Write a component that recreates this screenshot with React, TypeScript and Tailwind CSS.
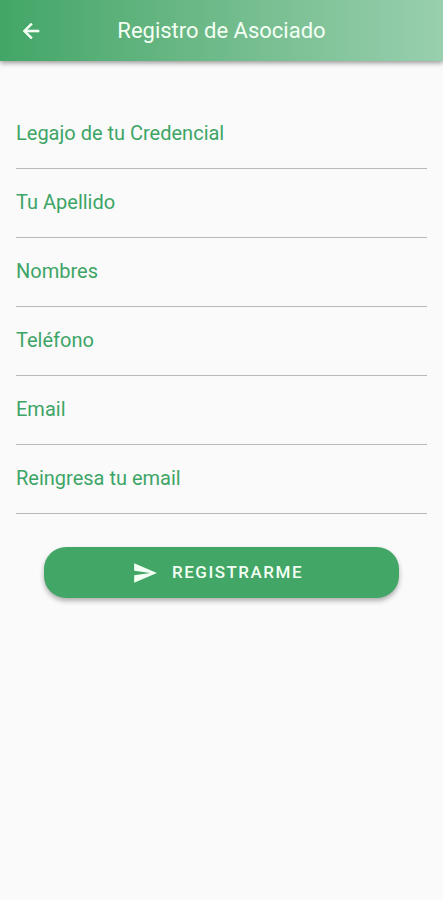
import React from "react";
import { MdSend } from "react-icons/md";

type Field = { id: string; label: string; type: string };

const fields: Field[] = [
  { id: "legajo", label: "Legajo de tu Credencial", type: "text" },
  { id: "apellido", label: "Tu Apellido", type: "text" },
  { id: "nombres", label: "Nombres", type: "text" },
  { id: "telefono", label: "Teléfono", type: "tel" },
  { id: "email", label: "Email", type: "email" },
  { id: "email-confirm", label: "Reingresa tu email", type: "email" },
];

function FormField({ id, label, type }: Field) {
  return (
    <div className="flex flex-col pt-[21px]">
      <label htmlFor={id} className="text-[20px] leading-6 text-[#3da566]">
        {label}
      </label>
      <input
        id={id}
        name={id}
        type={type}
        className="h-6 w-full border-b border-[#b9b9b9] bg-transparent text-base text-gray-800 outline-none focus:border-[#42a667]"
      />
    </div>
  );
}

function BackArrow() {
  return (
    <svg viewBox="0 0 24 24" className="size-6" fill="currentColor" stroke="currentColor" strokeWidth="0.6" aria-hidden="true">
      <path d="M20 11H7.83l5.59-5.59L12 4l-8 8 8 8 1.41-1.41L7.83 13H20v-2z" />
    </svg>
  );
}

export default function App() {
  return (
    <div className="min-h-screen bg-[#fafafa] font-['Roboto',sans-serif]">
      <header className="grid h-[61px] grid-cols-[48px_1fr_48px] items-center bg-linear-to-r from-[#42a667] to-[#98cfae] px-[7px] text-[#f4fff4] shadow-[0_2px_5px_rgba(0,0,0,0.4)]">
        <button type="button" aria-label="Volver" className="flex size-12 items-center justify-center">
          <BackArrow />
        </button>
        <h1 className="text-center text-[22px] leading-7">Registro de Asociado</h1>
      </header>

      <form className="px-4 pt-[39px]" onSubmit={(e) => e.preventDefault()}>
        {fields.map((field) => (
          <FormField key={field.id} {...field} />
        ))}
        <div className="px-7 pt-[33px]">
          <button
            type="submit"
            className="flex h-[51px] w-full items-center justify-center gap-3.5 rounded-[22px] bg-[#42a667] pr-2 text-[17px] font-medium tracking-[1.5px] text-[#f4fff4] shadow-[0_3px_5px_rgba(0,0,0,0.3)]"
          >
            <MdSend className="size-[26px]" />
            REGISTRARME
          </button>
        </div>
      </form>
    </div>
  );
}
